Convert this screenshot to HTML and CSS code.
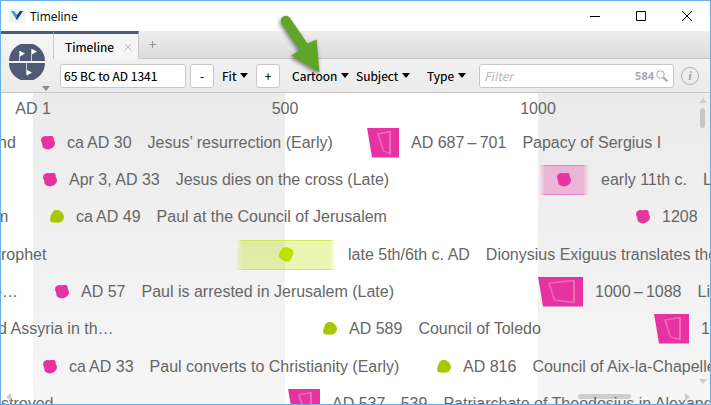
FILE: index.html
```html
<!DOCTYPE html>
<html lang="en">
<head>
    <meta charset="UTF-8">
    <meta name="viewport" content="width=device-width, initial-scale=1.0">
    <title>Timeline</title>
    <link rel="stylesheet" href="styles.css">
</head>
<body>
    <div class="window">
        <header class="titlebar">
            <svg class="app-icon" viewBox="0 0 16 14">
                <rect width="16" height="14" rx="2" fill="#f1f1f1"/>
                <path d="M2 2h4l2 3-1 5z" fill="#2f9be0"/>
                <path d="M14 2h-4L8 5l-1 5 1 1z" fill="#123f8c"/>
                <path d="M5 2h6L8 6z" fill="#dceefa"/>
            </svg>
            <h1 class="title">Timeline</h1>
            <button class="win-button" aria-label="Minimize">
                <svg viewBox="0 0 10 10"><path d="M0 5.5h10"/></svg>
            </button>
            <button class="win-button" aria-label="Maximize">
                <svg viewBox="0 0 10 10"><path d="M.5.5h9v9h-9z"/></svg>
            </button>
            <button class="win-button" aria-label="Close">
                <svg viewBox="0 0 10 10"><path d="M0 0l10 10M10 0L0 10"/></svg>
            </button>
        </header>

        <div class="panel-head">
            <button class="panel-menu" aria-label="Panel menu">
                <svg class="panel-icon" viewBox="0 0 36 36">
                    <path d="M0 17a18 18 0 0 1 36 0z" fill="#4f5b75"/>
                    <path d="M0 19a18 18 0 0 0 36 0z" fill="#4f5b75"/>
                    <path d="M10.500 17V7M22.500 17V5M17.500 19v12" stroke="#ccd0d8" fill="none"/>
                    <path d="M11 7l5 2.500-5 3zM23 5l5 2.500-5 3zM18 26l5 2.500-5 3z" fill="#fff"/>
                </svg>
                <span class="caret"></span>
            </button>

            <nav class="tabs">
                <div class="tab">
                    <a class="tab-name" href="#timeline">Timeline</a>
                    <button class="tab-button" aria-label="Close tab">
                        <svg viewBox="0 0 8 8"><path d="M.5.5l7 7M7.500.5l-7 7"/></svg>
                    </button>
                </div>
                <button class="tab-button tab-add" aria-label="New tab">
                    <svg viewBox="0 0 7 7"><path d="M0 3.500h7M3.500 0v7"/></svg>
                </button>
            </nav>

            <div class="toolbar">
                <input class="range" type="text" value="65 BC to AD 1341" aria-label="Date range">
                <button class="zoom-button">-</button>
                <div class="dropdown fit">
                    <select aria-label="Fit"><option>Fit</option></select>
                </div>
                <button class="zoom-button">+</button>
                <div class="dropdown cartoon">
                    <select aria-label="Style"><option>Cartoon</option></select>
                </div>
                <div class="dropdown subject">
                    <select aria-label="Subject"><option>Subject</option></select>
                </div>
                <div class="dropdown type">
                    <select aria-label="Type"><option>Type</option></select>
                </div>
                <label class="filter">
                    <input type="text" placeholder="Filter" aria-label="Filter">
                    <span class="count">584</span>
                    <svg viewBox="0 0 12 12"><circle cx="4.500" cy="4.500" r="3.800"/><path d="M7.200 7.200l4.300 4.300" stroke-width="2"/></svg>
                </label>
                <button class="info" aria-label="Information">i</button>
            </div>
        </div>

        <main class="timeline" id="timeline">
            <div class="century" style="left: 32px"></div>
            <div class="century" style="left: 537px"></div>

            <div class="ruler">
                <span class="tick" style="left: 32px">AD 1</span>
                <span class="tick" style="left: 284px">500</span>
                <span class="tick" style="left: 537px">1000</span>
            </div>

            <div class="row">
                <div class="event" style="left: -3px"><span>nd</span></div>
                <div class="event" style="left: 40px"><i class="dot"></i><time>ca&thinsp;AD 30</time><span>Jesus’ resurrection (Early)</span></div>
                <div class="event" style="left: 366px"><i class="bar" style="width: 32px"><i></i></i><time>AD 687&thinsp;–&thinsp;701</time><span>Papacy of Sergius I</span></div>
            </div>
            <div class="row">
                <div class="event" style="left: 42px"><i class="dot"></i><time>Apr 3, AD 33</time><span>Jesus dies on the cross (Late)</span></div>
                <div class="event" style="left: 538px"><i class="fuzzy" style="width: 50px"><i class="dot"></i></i><time>early 11th c.</time><span>Leo</span></div>
            </div>
            <div class="row">
                <div class="event" style="left: -6px"><span>m</span></div>
                <div class="event" style="left: 49px"><i class="dot green"></i><time>ca&thinsp;AD 49</time><span>Paul at the Council of Jerusalem</span></div>
                <div class="event" style="left: 635px"><i class="dot"></i><time>1208</time></div>
            </div>
            <div class="row">
                <div class="event" style="left: 0"><span>rophet</span></div>
                <div class="event" style="left: 235px"><i class="fuzzy lime" style="width: 100px"><i class="dot"></i></i><time>late 5th/6th c. AD</time><span>Dionysius Exiguus translates the</span></div>
            </div>
            <div class="row">
                <div class="event" style="left: -8px"><span>o…</span></div>
                <div class="event" style="left: 54px"><i class="dot"></i><time>AD 57</time><span>Paul is arrested in Jerusalem (Late)</span></div>
                <div class="event" style="left: 537px"><i class="bar" style="width: 45px"><i></i></i><time>1000&thinsp;–&thinsp;1088</time><span>Life</span></div>
            </div>
            <div class="row">
                <div class="event" style="left: -3px"><span>d Assyria in th…</span></div>
                <div class="event" style="left: 322px"><i class="dot green"></i><time>AD 589</time><span>Council of Toledo</span></div>
                <div class="event" style="left: 653px"><i class="bar" style="width: 35px"><i></i></i><time>12</time></div>
            </div>
            <div class="row">
                <div class="event" style="left: 42px"><i class="dot"></i><time>ca&thinsp;AD 33</time><span>Paul converts to Christianity (Early)</span></div>
                <div class="event" style="left: 436px"><i class="dot green"></i><time>AD 816</time><span>Council of Aix-la-Chapelle</span></div>
            </div>
            <div class="row">
                <div class="event" style="left: 0"><span>stroyed</span></div>
                <div class="event" style="left: 287px"><i class="bar" style="width: 32px"><i></i></i><time>AD 537&thinsp;–&thinsp;539</time><span>Patriarchate of Theodosius in Alexandria</span></div>
            </div>

            <div class="scroll scroll-y"></div>
            <div class="scroll scroll-x"></div>
            <span class="arrow up"></span>
            <span class="arrow down"></span>
            <span class="arrow left"></span>
            <span class="arrow right"></span>
        </main>

        <svg class="pointer" viewBox="0 0 50 70">
            <path d="M14.200 9.200L31.500 34.500 40.600 30.600 43.500 63.500 15.300 46.500 23.800 41.200 5.600 14.500A5 5 0 0 1 14.200 9.200z"/>
        </svg>
    </div>
</body>
</html>
```
FILE: styles.css
```css
* {
    box-sizing: border-box;
}

body {
    margin: 0;
    height: 100vh;
    overflow: hidden;
}

button, input, select {
    font: inherit;
    color: inherit;
    margin: 0;
    padding: 0;
    border: none;
    background: none;
}

.window {
    position: relative;
    display: flex;
    flex-direction: column;
    height: 100%;
    border: 1px solid #68ade8;
    background: #fff;
    font-family: "Noto Sans CJK SC", "Noto Sans", sans-serif;
    font-size: 12px;
    color: #000;
}

/* title bar */
.titlebar {
    display: flex;
    align-items: center;
    height: 30px;
    padding-left: 8px;
}

.app-icon {
    width: 16px;
    height: 14px;
}

.title {
    flex: 1;
    margin: 0 0 0 5px;
    font: 12px "Open Sans", sans-serif;
}

.win-button {
    width: 46px;
    height: 29px;
}

.win-button svg {
    display: block;
    width: 10px;
    height: 10px;
    margin: 0 auto;
    fill: none;
    stroke: #000;
}

/* tabs and toolbar */
.panel-head {
    display: grid;
    grid-template-columns: 52px minmax(0, 1fr);
    grid-template-rows: 28px 33px;
    border-bottom: 1px solid #c8c8c8;
    background: linear-gradient(#f6f6f6, #ebebeb);
}

.panel-menu {
    grid-row: 1 / 3;
    position: relative;
    padding-bottom: 2px;
    border-top: 3px solid #4f5b75;
}

.panel-icon {
    display: block;
    width: 36px;
    height: 36px;
    margin: 0 8px;
}

.caret {
    position: absolute;
    right: 3px;
    bottom: 1px;
    border: 4px solid transparent;
    border-top: 5px solid #888;
    border-bottom: none;
}

.tabs {
    display: flex;
    border-bottom: 1px solid #c8c8c8;
    background: linear-gradient(#eeeeee, #dcdcdc);
}

.tab {
    display: flex;
    align-items: center;
    gap: 10px;
    height: 28px;
    padding: 0 6px 0 11px;
    border: 1px solid #c8c8c8;
    border-top: 3px solid #4f5b75;
    border-bottom: none;
    background: #f5f5f5;
}

.tab-name {
    color: #000;
    text-decoration: none;
}

/* thickens the small interface text a little */
.tab-name, .range, .zoom-button, .dropdown select {
    text-shadow: 0 0 0 rgba(0, 0, 0, 0.4);
}

.tab-button svg {
    display: block;
    width: 8px;
    height: 8px;
    fill: none;
    stroke: #b5b5b5;
}

.tab-add {
    padding: 0 10px;
}

.tab-add svg {
    width: 7px;
    height: 7px;
    stroke: #999;
}

.toolbar {
    display: flex;
    align-items: center;
    padding: 0 11px 0 7px;
}

.range, .zoom-button, .filter {
    height: 24px;
    border: 1px solid #c8c8c8;
    border-radius: 3px;
    background: #fff;
}

.range {
    width: 126px;
    margin-right: 4px;
    padding: 0 3px;
}

.zoom-button {
    width: 24px;
    line-height: 20px;
}

.dropdown {
    display: flex;
    align-items: center;
    gap: 3px;
}

.dropdown select {
    appearance: none;
}

.dropdown::after {
    content: "";
    border: 4px solid transparent;
    border-top: 5px solid #000;
    border-bottom: none;
}

.fit {
    margin: 0 8px;
}

.cartoon {
    margin: 0 7px 0 12px;
}

.subject {
    margin-right: 17px;
}

.type {
    margin-right: 13px;
}

.filter {
    flex: 1;
    display: flex;
    align-items: center;
    min-width: 0;
    padding: 0 5px 0 4px;
}

.filter input {
    flex: 1;
    min-width: 0;
}

.filter input::placeholder {
    color: #b8b8b8;
    font-style: italic;
}

.count {
    margin-right: 2px;
    font: bold 11px "Noto Sans", sans-serif;
    color: #aaa;
}

.filter svg {
    width: 12px;
    height: 12px;
    fill: none;
    stroke: #aaa;
}

.info {
    width: 18px;
    height: 18px;
    margin-left: 7px;
    border: 1px solid #b0b0b0;
    border-radius: 50%;
    font: italic bold 13px/14px "Liberation Serif", serif;
    color: #aaa;
}

/* timeline canvas */
.timeline {
    position: relative;
    flex: 1;
    min-height: 0;
    overflow: hidden;
    font: 16px/18px "Liberation Sans", Arial, sans-serif;
    color: #666;
}

.century {
    position: absolute;
    top: 0;
    bottom: 0;
    width: 252px;
    background: linear-gradient(#ebebeb, #f6f6f6);
}

.ruler, .row {
    position: relative;
}

.ruler {
    height: 31px;
}

.tick {
    position: absolute;
    top: 7px;
    transform: translateX(-50%);
}

.row {
    height: 37px;
}

.row:nth-of-type(3n) {
    height: 38px;
}

.event {
    position: absolute;
    top: 0;
    display: flex;
    align-items: center;
    gap: 12px;
    height: 37px;
    white-space: nowrap;
}

.event time + span {
    margin-left: 4px;
}

.dot {
    width: 14px;
    height: 14px;
    background: #e733a1;
    clip-path: polygon(25% 4%, 50% 6%, 78% 0, 90% 14%, 91% 30%, 100% 50%, 97% 72%, 80% 90%, 55% 100%, 32% 96%, 12% 84%, 8% 58%, 0 38%, 4% 16%);
}

.green {
    background: #aac800;
    clip-path: polygon(50% 2%, 68% 8%, 88% 24%, 100% 46%, 97% 68%, 84% 88%, 58% 95%, 28% 92%, 6% 90%, 0 72%, 5% 46%, 18% 18%, 32% 6%);
}

.bar {
    height: 30px;
    padding: 3px 8px 3px 10px;
    background: #e733a1;
    clip-path: polygon(0 0, 100% 0, 100% 100%, 5px 100%);
}

.bar i {
    display: block;
    height: 24px;
    background: #f06bba;
    clip-path: polygon(evenodd, 0 3px, 100% 0, 100% 100%, 6px 21px, 0 3px, 2px 4px, 7px 20px, calc(100% - 2px) 22px, calc(100% - 2px) 2px, 2px 4px);
}

.fuzzy {
    display: flex;
    align-items: center;
    justify-content: center;
    height: 30px;
    border: solid rgba(231, 51, 161, 0.4);
    border-width: 1px 0;
    background: rgba(231, 51, 161, 0.3);
    mask-image: linear-gradient(90deg, transparent, #000 6px, #000 calc(100% - 6px), transparent);
}

.lime {
    border-color: rgba(190, 225, 0, 0.5);
    background: rgba(190, 225, 0, 0.3);
}

.lime .dot {
    width: 15px;
    height: 15px;
    background: #bee000;
    clip-path: polygon(28% 6%, 50% 0, 75% 6%, 97% 20%, 100% 42%, 88% 70%, 72% 98%, 48% 98%, 18% 82%, 0 60%, 10% 32%);
}

/* scrollbars */
.scroll {
    position: absolute;
    border-radius: 3px;
    background: rgba(0, 0, 0, 0.16);
}

.scroll-y {
    top: 15px;
    right: 5px;
    width: 5px;
    height: 20px;
}

.scroll-x {
    right: 79px;
    bottom: 5px;
    width: 53px;
    height: 5px;
}

.arrow {
    position: absolute;
    border: 4px solid transparent;
}

.up {
    top: 5px;
    right: 3px;
    border-top: none;
    border-bottom: 5px solid #ccc;
}

.down {
    right: 3px;
    bottom: 20px;
    border-bottom: none;
    border-top: 5px solid #ccc;
}

.left {
    left: 5px;
    bottom: 3px;
    border-left: none;
    border-right: 5px solid #ccc;
}

.right {
    right: 20px;
    bottom: 3px;
    border-right: none;
    border-left: 5px solid #ccc;
}

.pointer {
    position: absolute;
    top: 8px;
    left: 275px;
    width: 50px;
    height: 70px;
    fill: #5fa527;
    filter: drop-shadow(-1px 2px 2px rgba(0, 0, 0, 0.5));
    pointer-events: none;
}
```
